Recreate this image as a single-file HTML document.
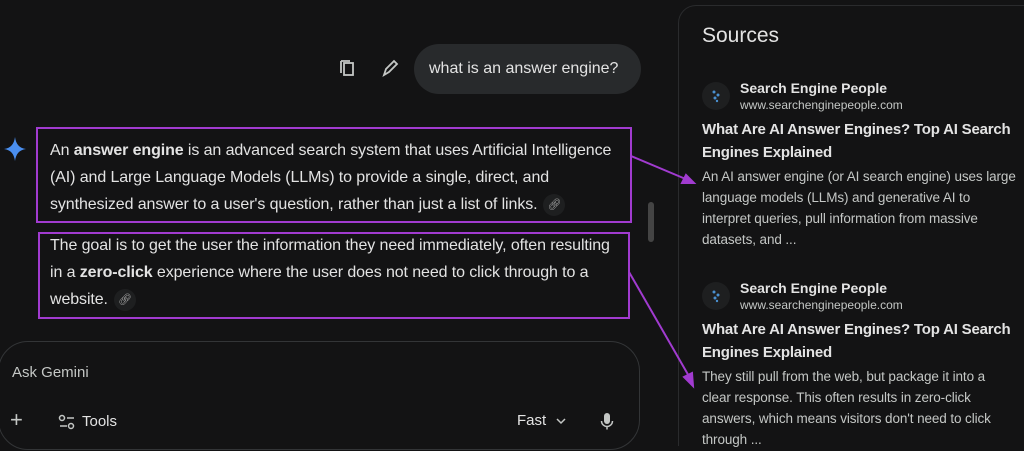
<!DOCTYPE html>
<html style="margin:0;width:1024px;height:451px;overflow:hidden"><head><style>
body{margin:0;width:1024px;height:451px;background:#131314;overflow:hidden;position:relative;font-family:"Liberation Sans",sans-serif;color:#e3e3e3}
.a{position:absolute}
.t{font-size:16px;line-height:27px;color:#e3e3e3;white-space:nowrap;letter-spacing:-0.1px}
.box{position:absolute;border:2px solid #a13bd0}
.lk{display:inline-block;width:22px;height:22px;border-radius:11px;background:#1e1f20;vertical-align:middle;text-align:center;font-size:11px;line-height:22px;color:#aaa;margin-left:6px}
.src .n{font-size:14px;font-weight:bold;color:#e3e3e3;white-space:nowrap}
.src .u{font-size:12px;color:#c4c7c5;white-space:nowrap}
.src .ti{font-size:15px;font-weight:bold;line-height:23px;color:#e3e3e3;white-space:nowrap;letter-spacing:-0.2px}
.src .d{font-size:13.5px;line-height:21px;color:#c4c7c5;white-space:nowrap;letter-spacing:-0.1px}
.ic{position:absolute;width:28px;height:28px;border-radius:14px;background:#1e1f20}
</style></head><body>
<div class="a" style="left:678px;top:5px;width:400px;height:440px;border:1px solid #2a2b2d;border-bottom:none;border-radius:18px 18px 0 0;background:#131314"></div>
<div class="a" style="left:702px;top:24px;font-size:21px;color:#e3e3e3">Sources</div>

<div class="src">
<div class="ic" style="left:702px;top:82px"><svg width="28" height="28"><g fill="#4a90d0"><circle cx="12" cy="10" r="1.5"/><circle cx="16" cy="13" r="1.5"/><circle cx="13" cy="16" r="1.5"/><circle cx="15" cy="19" r="1.2"/></g></svg></div>
<div class="a n" style="left:740px;top:80px">Search Engine People</div>
<div class="a u" style="left:740px;top:98px">www.searchenginepeople.com</div>
<div class="a ti" style="left:702px;top:118px">What Are AI Answer Engines? Top AI Search<br>Engines Explained</div>
<div class="a d" style="left:702px;top:166px">An AI answer engine (or AI search engine) uses large<br>language models (LLMs) and generative AI to<br>interpret queries, pull information from massive<br>datasets, and ...</div>

<div class="ic" style="left:702px;top:282px"><svg width="28" height="28"><g fill="#4a90d0"><circle cx="12" cy="10" r="1.5"/><circle cx="16" cy="13" r="1.5"/><circle cx="13" cy="16" r="1.5"/><circle cx="15" cy="19" r="1.2"/></g></svg></div>
<div class="a n" style="left:740px;top:280px">Search Engine People</div>
<div class="a u" style="left:740px;top:298px">www.searchenginepeople.com</div>
<div class="a ti" style="left:702px;top:318px">What Are AI Answer Engines? Top AI Search<br>Engines Explained</div>
<div class="a d" style="left:702px;top:366px">They still pull from the web, but package it into a<br>clear response. This often results in zero-click<br>answers, which means visitors don't need to click<br>through ...</div>
</div>

<svg class="a" style="left:338px;top:58px" width="64" height="22"><rect x="6" y="5" width="9" height="12" fill="none" stroke="#c4c7c5" stroke-width="1.8"/><path d="M3 3v12M3 3h9" stroke="#c4c7c5" stroke-width="1.8" fill="none"/><path d="M46 17l2-6 8-8 3 3-8 8z" fill="none" stroke="#c4c7c5" stroke-width="1.8"/></svg>
<div class="a" style="left:414px;top:44px;width:227px;height:50px;border-radius:25px;background:#282a2c"></div>
<div class="a" style="left:429px;top:60px;font-size:16px">what is an answer engine?</div>

<svg class="a" style="left:3px;top:136px" width="24" height="26"><path d="M12 1C13 8 16 12 23 13 16 14 13 18 12 25 11 18 8 14 1 13 8 12 11 8 12 1z" fill="#4a8ff0"/></svg>

<div class="box" style="left:36px;top:127px;width:592px;height:92px"></div>
<div class="a t" style="left:50px;top:137px">An <b>answer engine</b> is an advanced search system that uses Artificial Intelligence<br>(AI) and Large Language Models (LLMs) to provide a single, direct, and<br>synthesized answer to a user's question, rather than just a list of links.<span class="lk">&#x1F517;&#xFE0E;</span></div>

<div class="box" style="left:38px;top:232px;width:588px;height:83px"></div>
<div class="a t" style="left:50px;top:232px">The goal is to get the user the information they need immediately, often resulting<br>in a <b>zero-click</b> experience where the user does not need to click through to a<br>website.<span class="lk">&#x1F517;&#xFE0E;</span></div>

<div class="a" style="left:648px;top:202px;width:6px;height:40px;border-radius:3px;background:#444"></div>

<svg class="a" style="left:0;top:0" width="1024" height="451"><g stroke="#a13bd0" stroke-width="2" fill="#a13bd0"><line x1="631" y1="156" x2="688" y2="180"/><polygon points="694,183 682,183 686,175"/><line x1="629" y1="272" x2="690" y2="378"/><polygon points="693,386 684,377 692,373"/></g></svg>

<div class="a" style="left:-2px;top:341px;width:640px;height:107px;border:1px solid #333537;border-radius:30px;background:#131314"></div>
<div class="a" style="left:12px;top:364px;font-size:15px;color:#c4c7c5">Ask Gemini</div>
<div class="a" style="left:10px;top:408px;font-size:22px;color:#c4c7c5;line-height:24px">+</div>
<svg class="a" style="left:58px;top:414px" width="18" height="16"><g stroke="#c4c7c5" stroke-width="1.5" fill="none"><circle cx="4" cy="4" r="2.5"/><path d="M9 4h7M2 12h7"/><circle cx="13" cy="12" r="2.5"/></g></svg>
<div class="a" style="left:82px;top:413px;font-size:15px;color:#e3e3e3">Tools</div>
<div class="a" style="left:517px;top:412px;font-size:15px;color:#e3e3e3">Fast</div>
<svg class="a" style="left:555px;top:416px" width="12" height="10"><path d="M2 3l4 4 4-4" stroke="#c4c7c5" stroke-width="1.5" fill="none"/></svg>
<svg class="a" style="left:600px;top:412px" width="14" height="20"><rect x="4" y="1" width="6" height="11" rx="3" fill="#c4c7c5"/><path d="M1.5 9a5.5 5.5 0 0 0 11 0M7 14.5v3" stroke="#c4c7c5" stroke-width="1.5" fill="none"/></svg>
</body></html>
